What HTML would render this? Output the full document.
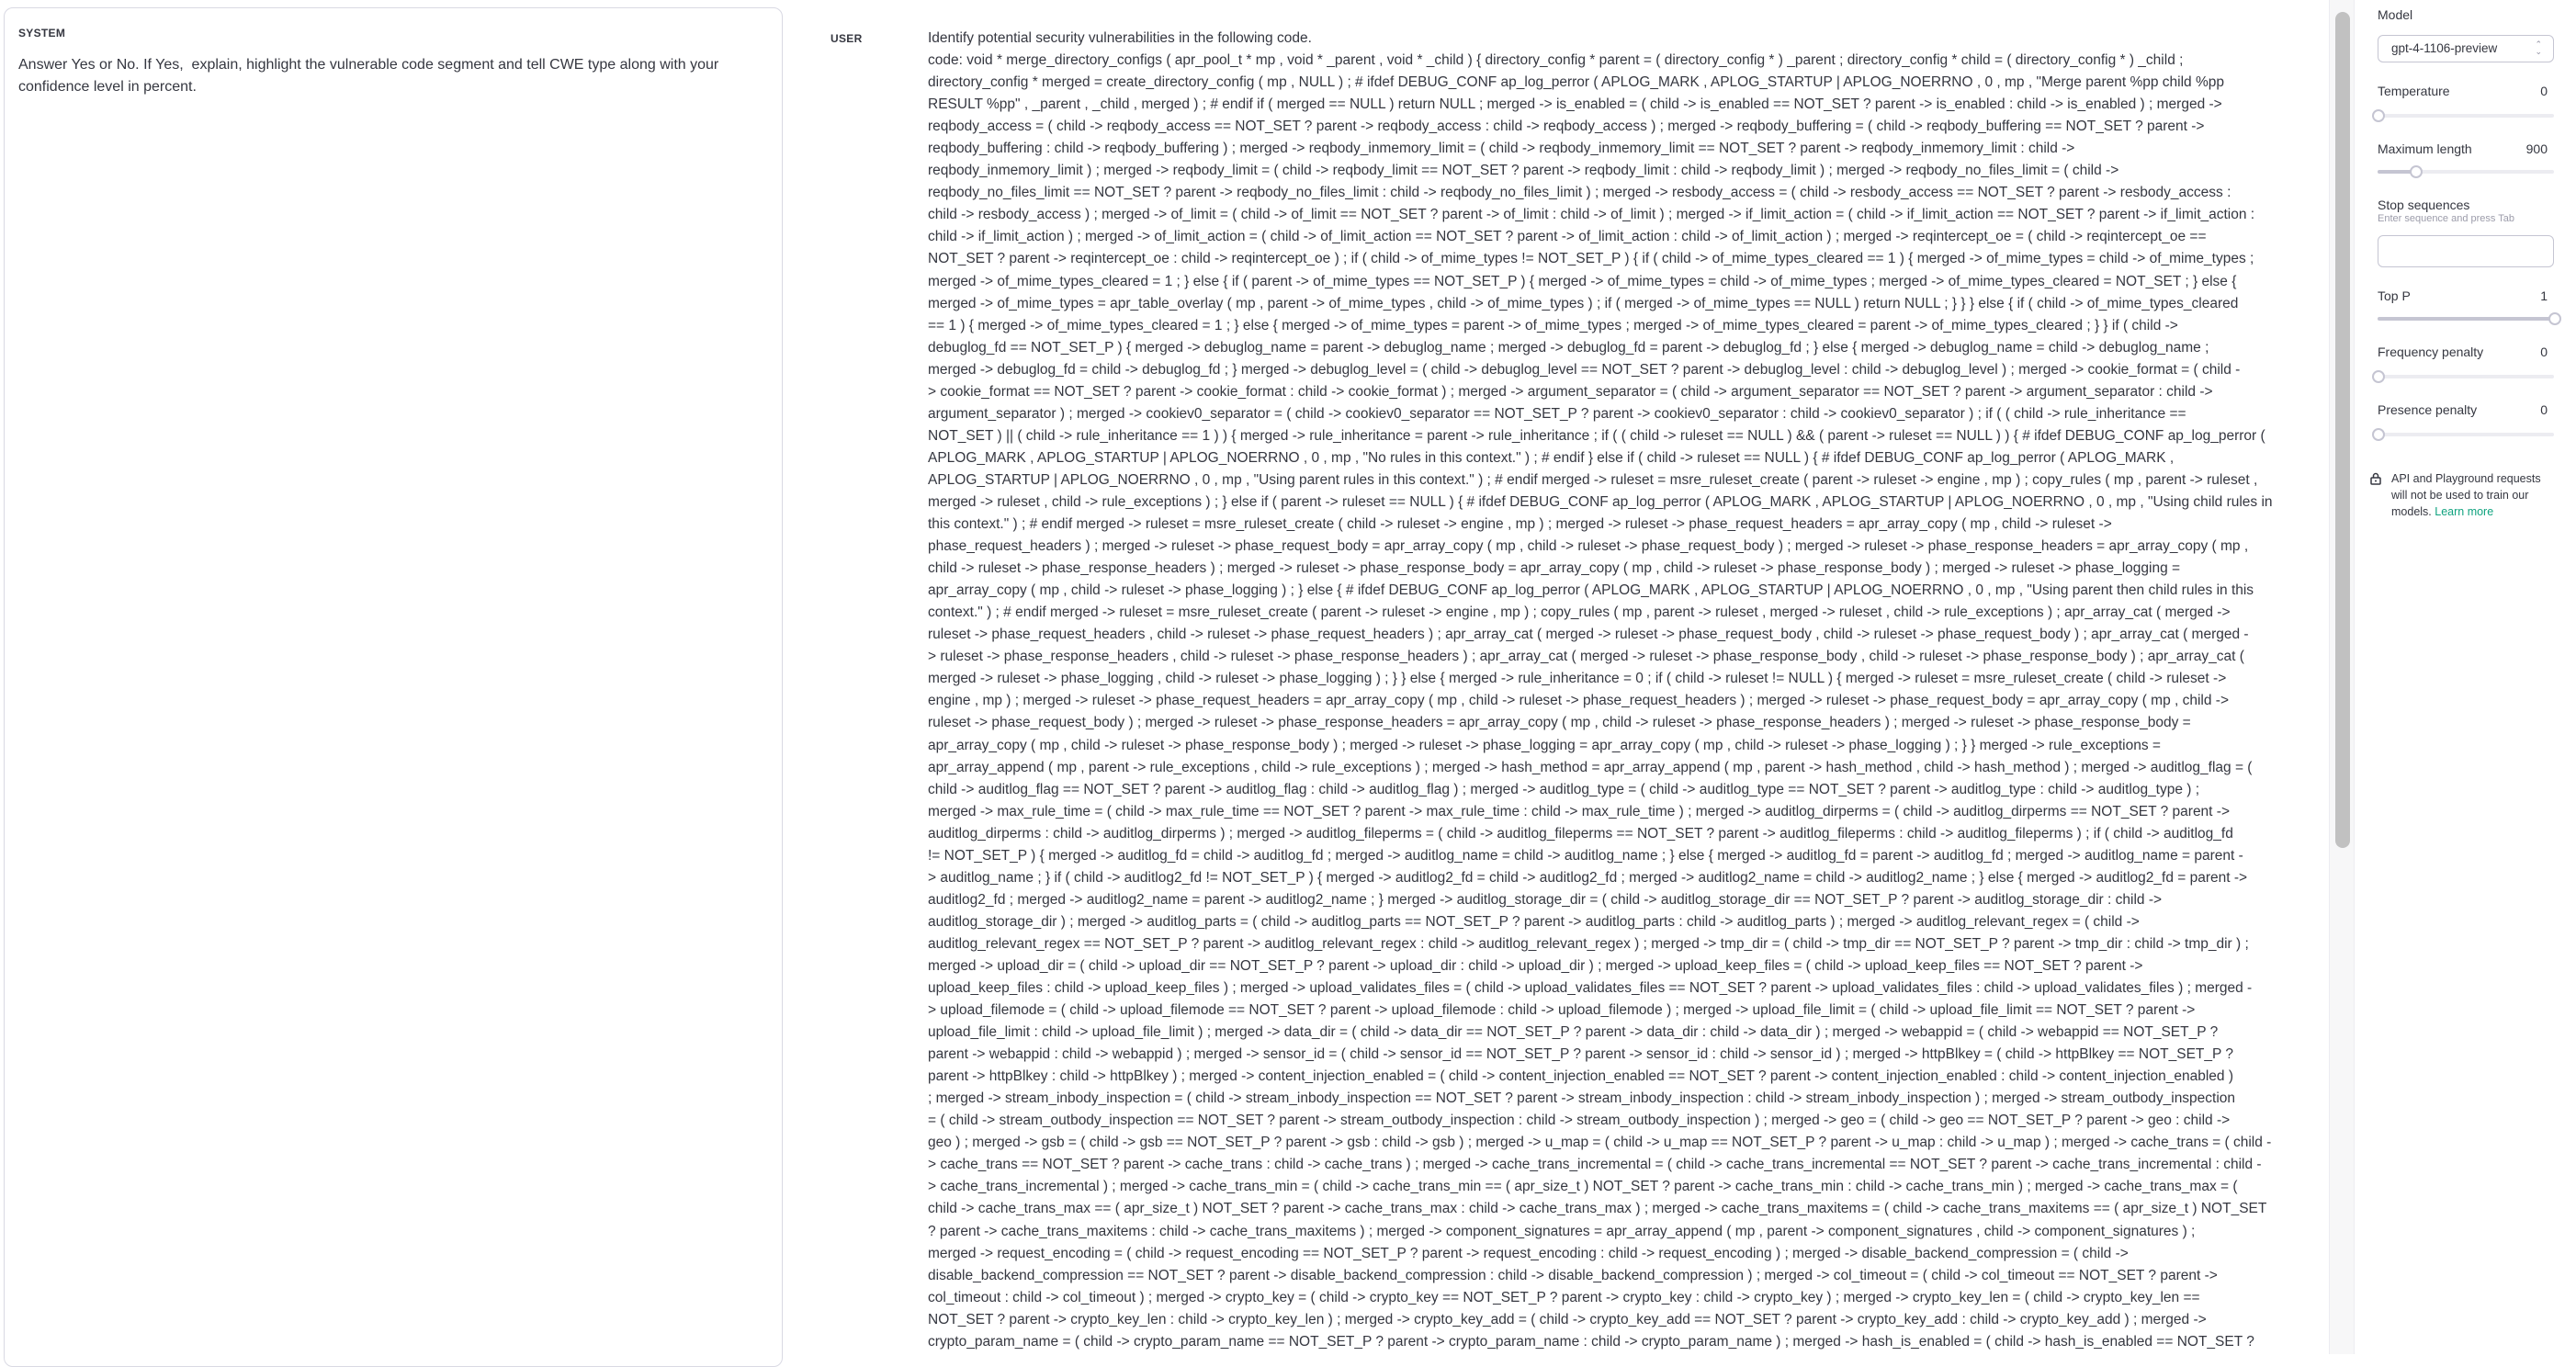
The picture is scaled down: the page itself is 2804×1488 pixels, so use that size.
<!DOCTYPE html>
<html><head><meta charset="utf-8"><style>
*{box-sizing:border-box;margin:0;padding:0}
body{width:2804px;height:1474px;overflow:hidden;background:#fff;font-family:"Liberation Sans",sans-serif;color:#353740;position:relative}
.sys{position:absolute;left:4px;top:8px;width:848px;height:1480px;border:1px solid #d9d9e3;border-radius:10px}
.lab{position:absolute;font-size:12px;font-weight:bold;letter-spacing:.3px;color:#353740}
.systxt{position:absolute;left:20px;top:59px;width:780px;font-size:16px;line-height:24px}
.code{position:absolute;left:1010px;top:30px;font-size:15.5px;line-height:24.05px;white-space:nowrap}
.track{position:absolute;left:2535px;top:0;width:28px;height:1474px;background:#f7f7f8;border-left:1px solid #ececf1;border-right:1px solid #ececf1}
.thumb{position:absolute;left:2542px;top:13px;width:16px;height:910px;border-radius:8px;background:#c1c1c1}
.sb{position:absolute;left:2588px;font-size:14px;color:#353740;width:192px}
.val{position:absolute;right:7px;font-size:14px}
.sl{position:absolute;left:2588px;width:192px;height:4px;border-radius:2px;background:#ececf1}
.kn{position:absolute;width:14px;height:14px;border-radius:50%;background:#fff;border:2px solid #c5c5d2;top:-5px}
.box{position:absolute;left:2588px;width:192px;border:1px solid #c5c5d2;border-radius:6px}
</style></head><body>
<div class="sys"></div>
<div class="lab" style="left:20px;top:29px">SYSTEM</div>
<div class="systxt">Answer Yes or No. If Yes,&nbsp; explain, highlight the vulnerable code segment and tell CWE type along with your confidence level in percent.</div>
<div class="lab" style="left:904px;top:35px">USER</div>
<div class="code">
<div>Identify potential security vulnerabilities in the following code.</div>
<div>code: void * merge_directory_configs ( apr_pool_t * mp , void * _parent , void * _child ) { directory_config * parent = ( directory_config * ) _parent ; directory_config * child = ( directory_config * ) _child ;</div>
<div>directory_config * merged = create_directory_config ( mp , NULL ) ; # ifdef DEBUG_CONF ap_log_perror ( APLOG_MARK , APLOG_STARTUP | APLOG_NOERRNO , 0 , mp , "Merge parent %pp child %pp</div>
<div>RESULT %pp" , _parent , _child , merged ) ; # endif if ( merged == NULL ) return NULL ; merged -&gt; is_enabled = ( child -&gt; is_enabled == NOT_SET ? parent -&gt; is_enabled : child -&gt; is_enabled ) ; merged -&gt;</div>
<div>reqbody_access = ( child -&gt; reqbody_access == NOT_SET ? parent -&gt; reqbody_access : child -&gt; reqbody_access ) ; merged -&gt; reqbody_buffering = ( child -&gt; reqbody_buffering == NOT_SET ? parent -&gt;</div>
<div>reqbody_buffering : child -&gt; reqbody_buffering ) ; merged -&gt; reqbody_inmemory_limit = ( child -&gt; reqbody_inmemory_limit == NOT_SET ? parent -&gt; reqbody_inmemory_limit : child -&gt;</div>
<div>reqbody_inmemory_limit ) ; merged -&gt; reqbody_limit = ( child -&gt; reqbody_limit == NOT_SET ? parent -&gt; reqbody_limit : child -&gt; reqbody_limit ) ; merged -&gt; reqbody_no_files_limit = ( child -&gt;</div>
<div>reqbody_no_files_limit == NOT_SET ? parent -&gt; reqbody_no_files_limit : child -&gt; reqbody_no_files_limit ) ; merged -&gt; resbody_access = ( child -&gt; resbody_access == NOT_SET ? parent -&gt; resbody_access :</div>
<div>child -&gt; resbody_access ) ; merged -&gt; of_limit = ( child -&gt; of_limit == NOT_SET ? parent -&gt; of_limit : child -&gt; of_limit ) ; merged -&gt; if_limit_action = ( child -&gt; if_limit_action == NOT_SET ? parent -&gt; if_limit_action :</div>
<div>child -&gt; if_limit_action ) ; merged -&gt; of_limit_action = ( child -&gt; of_limit_action == NOT_SET ? parent -&gt; of_limit_action : child -&gt; of_limit_action ) ; merged -&gt; reqintercept_oe = ( child -&gt; reqintercept_oe ==</div>
<div>NOT_SET ? parent -&gt; reqintercept_oe : child -&gt; reqintercept_oe ) ; if ( child -&gt; of_mime_types != NOT_SET_P ) { if ( child -&gt; of_mime_types_cleared == 1 ) { merged -&gt; of_mime_types = child -&gt; of_mime_types ;</div>
<div>merged -&gt; of_mime_types_cleared = 1 ; } else { if ( parent -&gt; of_mime_types == NOT_SET_P ) { merged -&gt; of_mime_types = child -&gt; of_mime_types ; merged -&gt; of_mime_types_cleared = NOT_SET ; } else {</div>
<div>merged -&gt; of_mime_types = apr_table_overlay ( mp , parent -&gt; of_mime_types , child -&gt; of_mime_types ) ; if ( merged -&gt; of_mime_types == NULL ) return NULL ; } } } else { if ( child -&gt; of_mime_types_cleared</div>
<div>== 1 ) { merged -&gt; of_mime_types_cleared = 1 ; } else { merged -&gt; of_mime_types = parent -&gt; of_mime_types ; merged -&gt; of_mime_types_cleared = parent -&gt; of_mime_types_cleared ; } } if ( child -&gt;</div>
<div>debuglog_fd == NOT_SET_P ) { merged -&gt; debuglog_name = parent -&gt; debuglog_name ; merged -&gt; debuglog_fd = parent -&gt; debuglog_fd ; } else { merged -&gt; debuglog_name = child -&gt; debuglog_name ;</div>
<div>merged -&gt; debuglog_fd = child -&gt; debuglog_fd ; } merged -&gt; debuglog_level = ( child -&gt; debuglog_level == NOT_SET ? parent -&gt; debuglog_level : child -&gt; debuglog_level ) ; merged -&gt; cookie_format = ( child -</div>
<div>&gt; cookie_format == NOT_SET ? parent -&gt; cookie_format : child -&gt; cookie_format ) ; merged -&gt; argument_separator = ( child -&gt; argument_separator == NOT_SET ? parent -&gt; argument_separator : child -&gt;</div>
<div>argument_separator ) ; merged -&gt; cookiev0_separator = ( child -&gt; cookiev0_separator == NOT_SET_P ? parent -&gt; cookiev0_separator : child -&gt; cookiev0_separator ) ; if ( ( child -&gt; rule_inheritance ==</div>
<div>NOT_SET ) || ( child -&gt; rule_inheritance == 1 ) ) { merged -&gt; rule_inheritance = parent -&gt; rule_inheritance ; if ( ( child -&gt; ruleset == NULL ) &amp;&amp; ( parent -&gt; ruleset == NULL ) ) { # ifdef DEBUG_CONF ap_log_perror (</div>
<div>APLOG_MARK , APLOG_STARTUP | APLOG_NOERRNO , 0 , mp , "No rules in this context." ) ; # endif } else if ( child -&gt; ruleset == NULL ) { # ifdef DEBUG_CONF ap_log_perror ( APLOG_MARK ,</div>
<div>APLOG_STARTUP | APLOG_NOERRNO , 0 , mp , "Using parent rules in this context." ) ; # endif merged -&gt; ruleset = msre_ruleset_create ( parent -&gt; ruleset -&gt; engine , mp ) ; copy_rules ( mp , parent -&gt; ruleset ,</div>
<div>merged -&gt; ruleset , child -&gt; rule_exceptions ) ; } else if ( parent -&gt; ruleset == NULL ) { # ifdef DEBUG_CONF ap_log_perror ( APLOG_MARK , APLOG_STARTUP | APLOG_NOERRNO , 0 , mp , "Using child rules in</div>
<div>this context." ) ; # endif merged -&gt; ruleset = msre_ruleset_create ( child -&gt; ruleset -&gt; engine , mp ) ; merged -&gt; ruleset -&gt; phase_request_headers = apr_array_copy ( mp , child -&gt; ruleset -&gt;</div>
<div>phase_request_headers ) ; merged -&gt; ruleset -&gt; phase_request_body = apr_array_copy ( mp , child -&gt; ruleset -&gt; phase_request_body ) ; merged -&gt; ruleset -&gt; phase_response_headers = apr_array_copy ( mp ,</div>
<div>child -&gt; ruleset -&gt; phase_response_headers ) ; merged -&gt; ruleset -&gt; phase_response_body = apr_array_copy ( mp , child -&gt; ruleset -&gt; phase_response_body ) ; merged -&gt; ruleset -&gt; phase_logging =</div>
<div>apr_array_copy ( mp , child -&gt; ruleset -&gt; phase_logging ) ; } else { # ifdef DEBUG_CONF ap_log_perror ( APLOG_MARK , APLOG_STARTUP | APLOG_NOERRNO , 0 , mp , "Using parent then child rules in this</div>
<div>context." ) ; # endif merged -&gt; ruleset = msre_ruleset_create ( parent -&gt; ruleset -&gt; engine , mp ) ; copy_rules ( mp , parent -&gt; ruleset , merged -&gt; ruleset , child -&gt; rule_exceptions ) ; apr_array_cat ( merged -&gt;</div>
<div>ruleset -&gt; phase_request_headers , child -&gt; ruleset -&gt; phase_request_headers ) ; apr_array_cat ( merged -&gt; ruleset -&gt; phase_request_body , child -&gt; ruleset -&gt; phase_request_body ) ; apr_array_cat ( merged -</div>
<div>&gt; ruleset -&gt; phase_response_headers , child -&gt; ruleset -&gt; phase_response_headers ) ; apr_array_cat ( merged -&gt; ruleset -&gt; phase_response_body , child -&gt; ruleset -&gt; phase_response_body ) ; apr_array_cat (</div>
<div>merged -&gt; ruleset -&gt; phase_logging , child -&gt; ruleset -&gt; phase_logging ) ; } } else { merged -&gt; rule_inheritance = 0 ; if ( child -&gt; ruleset != NULL ) { merged -&gt; ruleset = msre_ruleset_create ( child -&gt; ruleset -&gt;</div>
<div>engine , mp ) ; merged -&gt; ruleset -&gt; phase_request_headers = apr_array_copy ( mp , child -&gt; ruleset -&gt; phase_request_headers ) ; merged -&gt; ruleset -&gt; phase_request_body = apr_array_copy ( mp , child -&gt;</div>
<div>ruleset -&gt; phase_request_body ) ; merged -&gt; ruleset -&gt; phase_response_headers = apr_array_copy ( mp , child -&gt; ruleset -&gt; phase_response_headers ) ; merged -&gt; ruleset -&gt; phase_response_body =</div>
<div>apr_array_copy ( mp , child -&gt; ruleset -&gt; phase_response_body ) ; merged -&gt; ruleset -&gt; phase_logging = apr_array_copy ( mp , child -&gt; ruleset -&gt; phase_logging ) ; } } merged -&gt; rule_exceptions =</div>
<div>apr_array_append ( mp , parent -&gt; rule_exceptions , child -&gt; rule_exceptions ) ; merged -&gt; hash_method = apr_array_append ( mp , parent -&gt; hash_method , child -&gt; hash_method ) ; merged -&gt; auditlog_flag = (</div>
<div>child -&gt; auditlog_flag == NOT_SET ? parent -&gt; auditlog_flag : child -&gt; auditlog_flag ) ; merged -&gt; auditlog_type = ( child -&gt; auditlog_type == NOT_SET ? parent -&gt; auditlog_type : child -&gt; auditlog_type ) ;</div>
<div>merged -&gt; max_rule_time = ( child -&gt; max_rule_time == NOT_SET ? parent -&gt; max_rule_time : child -&gt; max_rule_time ) ; merged -&gt; auditlog_dirperms = ( child -&gt; auditlog_dirperms == NOT_SET ? parent -&gt;</div>
<div>auditlog_dirperms : child -&gt; auditlog_dirperms ) ; merged -&gt; auditlog_fileperms = ( child -&gt; auditlog_fileperms == NOT_SET ? parent -&gt; auditlog_fileperms : child -&gt; auditlog_fileperms ) ; if ( child -&gt; auditlog_fd</div>
<div>!= NOT_SET_P ) { merged -&gt; auditlog_fd = child -&gt; auditlog_fd ; merged -&gt; auditlog_name = child -&gt; auditlog_name ; } else { merged -&gt; auditlog_fd = parent -&gt; auditlog_fd ; merged -&gt; auditlog_name = parent -</div>
<div>&gt; auditlog_name ; } if ( child -&gt; auditlog2_fd != NOT_SET_P ) { merged -&gt; auditlog2_fd = child -&gt; auditlog2_fd ; merged -&gt; auditlog2_name = child -&gt; auditlog2_name ; } else { merged -&gt; auditlog2_fd = parent -&gt;</div>
<div>auditlog2_fd ; merged -&gt; auditlog2_name = parent -&gt; auditlog2_name ; } merged -&gt; auditlog_storage_dir = ( child -&gt; auditlog_storage_dir == NOT_SET_P ? parent -&gt; auditlog_storage_dir : child -&gt;</div>
<div>auditlog_storage_dir ) ; merged -&gt; auditlog_parts = ( child -&gt; auditlog_parts == NOT_SET_P ? parent -&gt; auditlog_parts : child -&gt; auditlog_parts ) ; merged -&gt; auditlog_relevant_regex = ( child -&gt;</div>
<div>auditlog_relevant_regex == NOT_SET_P ? parent -&gt; auditlog_relevant_regex : child -&gt; auditlog_relevant_regex ) ; merged -&gt; tmp_dir = ( child -&gt; tmp_dir == NOT_SET_P ? parent -&gt; tmp_dir : child -&gt; tmp_dir ) ;</div>
<div>merged -&gt; upload_dir = ( child -&gt; upload_dir == NOT_SET_P ? parent -&gt; upload_dir : child -&gt; upload_dir ) ; merged -&gt; upload_keep_files = ( child -&gt; upload_keep_files == NOT_SET ? parent -&gt;</div>
<div>upload_keep_files : child -&gt; upload_keep_files ) ; merged -&gt; upload_validates_files = ( child -&gt; upload_validates_files == NOT_SET ? parent -&gt; upload_validates_files : child -&gt; upload_validates_files ) ; merged -</div>
<div>&gt; upload_filemode = ( child -&gt; upload_filemode == NOT_SET ? parent -&gt; upload_filemode : child -&gt; upload_filemode ) ; merged -&gt; upload_file_limit = ( child -&gt; upload_file_limit == NOT_SET ? parent -&gt;</div>
<div>upload_file_limit : child -&gt; upload_file_limit ) ; merged -&gt; data_dir = ( child -&gt; data_dir == NOT_SET_P ? parent -&gt; data_dir : child -&gt; data_dir ) ; merged -&gt; webappid = ( child -&gt; webappid == NOT_SET_P ?</div>
<div>parent -&gt; webappid : child -&gt; webappid ) ; merged -&gt; sensor_id = ( child -&gt; sensor_id == NOT_SET_P ? parent -&gt; sensor_id : child -&gt; sensor_id ) ; merged -&gt; httpBlkey = ( child -&gt; httpBlkey == NOT_SET_P ?</div>
<div>parent -&gt; httpBlkey : child -&gt; httpBlkey ) ; merged -&gt; content_injection_enabled = ( child -&gt; content_injection_enabled == NOT_SET ? parent -&gt; content_injection_enabled : child -&gt; content_injection_enabled )</div>
<div>; merged -&gt; stream_inbody_inspection = ( child -&gt; stream_inbody_inspection == NOT_SET ? parent -&gt; stream_inbody_inspection : child -&gt; stream_inbody_inspection ) ; merged -&gt; stream_outbody_inspection</div>
<div>= ( child -&gt; stream_outbody_inspection == NOT_SET ? parent -&gt; stream_outbody_inspection : child -&gt; stream_outbody_inspection ) ; merged -&gt; geo = ( child -&gt; geo == NOT_SET_P ? parent -&gt; geo : child -&gt;</div>
<div>geo ) ; merged -&gt; gsb = ( child -&gt; gsb == NOT_SET_P ? parent -&gt; gsb : child -&gt; gsb ) ; merged -&gt; u_map = ( child -&gt; u_map == NOT_SET_P ? parent -&gt; u_map : child -&gt; u_map ) ; merged -&gt; cache_trans = ( child -</div>
<div>&gt; cache_trans == NOT_SET ? parent -&gt; cache_trans : child -&gt; cache_trans ) ; merged -&gt; cache_trans_incremental = ( child -&gt; cache_trans_incremental == NOT_SET ? parent -&gt; cache_trans_incremental : child -</div>
<div>&gt; cache_trans_incremental ) ; merged -&gt; cache_trans_min = ( child -&gt; cache_trans_min == ( apr_size_t ) NOT_SET ? parent -&gt; cache_trans_min : child -&gt; cache_trans_min ) ; merged -&gt; cache_trans_max = (</div>
<div>child -&gt; cache_trans_max == ( apr_size_t ) NOT_SET ? parent -&gt; cache_trans_max : child -&gt; cache_trans_max ) ; merged -&gt; cache_trans_maxitems = ( child -&gt; cache_trans_maxitems == ( apr_size_t ) NOT_SET</div>
<div>? parent -&gt; cache_trans_maxitems : child -&gt; cache_trans_maxitems ) ; merged -&gt; component_signatures = apr_array_append ( mp , parent -&gt; component_signatures , child -&gt; component_signatures ) ;</div>
<div>merged -&gt; request_encoding = ( child -&gt; request_encoding == NOT_SET_P ? parent -&gt; request_encoding : child -&gt; request_encoding ) ; merged -&gt; disable_backend_compression = ( child -&gt;</div>
<div>disable_backend_compression == NOT_SET ? parent -&gt; disable_backend_compression : child -&gt; disable_backend_compression ) ; merged -&gt; col_timeout = ( child -&gt; col_timeout == NOT_SET ? parent -&gt;</div>
<div>col_timeout : child -&gt; col_timeout ) ; merged -&gt; crypto_key = ( child -&gt; crypto_key == NOT_SET_P ? parent -&gt; crypto_key : child -&gt; crypto_key ) ; merged -&gt; crypto_key_len = ( child -&gt; crypto_key_len ==</div>
<div>NOT_SET ? parent -&gt; crypto_key_len : child -&gt; crypto_key_len ) ; merged -&gt; crypto_key_add = ( child -&gt; crypto_key_add == NOT_SET ? parent -&gt; crypto_key_add : child -&gt; crypto_key_add ) ; merged -&gt;</div>
<div>crypto_param_name = ( child -&gt; crypto_param_name == NOT_SET_P ? parent -&gt; crypto_param_name : child -&gt; crypto_param_name ) ; merged -&gt; hash_is_enabled = ( child -&gt; hash_is_enabled == NOT_SET ?</div>
</div>

<div class="track"></div>
<div class="thumb"></div>

<div class="sb" style="top:8px">Model</div>
<div class="box" style="top:38px;height:30px"><span style="position:absolute;left:14px;top:6px;font-size:13.5px">gpt-4-1106-preview</span><span style="position:absolute;right:12px;top:5px;font-size:9px;color:#8e8ea0;line-height:8px">&#8963;<br>&#8964;</span></div>

<div class="sb" style="top:91px">Temperature<span class="val">0</span></div>
<div class="sl" style="top:124px"><div class="kn" style="left:-6px"></div></div>

<div class="sb" style="top:154px">Maximum length<span class="val">900</span></div>
<div class="sl" style="top:185px"><div style="width:42px;height:4px;background:#c5c5d2;border-radius:2px"></div><div class="kn" style="left:35px"></div></div>

<div class="sb" style="top:215px">Stop sequences</div>
<div class="sb" style="top:232px;font-size:11px;color:#9c9caa">Enter sequence and press Tab</div>
<div class="box" style="top:256px;height:35px"></div>

<div class="sb" style="top:314px">Top P<span class="val">1</span></div>
<div class="sl" style="top:345px"><div style="width:192px;height:4px;background:#c5c5d2;border-radius:2px"></div><div class="kn" style="left:186px"></div></div>

<div class="sb" style="top:375px">Frequency penalty<span class="val">0</span></div>
<div class="sl" style="top:408px"><div class="kn" style="left:-6px"></div></div>

<div class="sb" style="top:438px">Presence penalty<span class="val">0</span></div>
<div class="sl" style="top:471px"><div class="kn" style="left:-6px"></div></div>

<svg style="position:absolute;left:2579px;top:514px" width="14" height="14" viewBox="0 0 14 14"><rect x="2" y="6" width="10" height="7" rx="1" fill="none" stroke="#353740" stroke-width="1.5"/><path d="M4.5 6V4a2.5 2.5 0 0 1 5 0v2" fill="none" stroke="#353740" stroke-width="1.5"/><circle cx="7" cy="9.5" r="1" fill="#353740"/></svg>
<div class="sb" style="left:2603px;top:512px;font-size:12.5px;line-height:18px;width:180px">API and Playground requests will not be used to train our models. <span style="color:#10a37f">Learn more</span></div>
</body></html>
